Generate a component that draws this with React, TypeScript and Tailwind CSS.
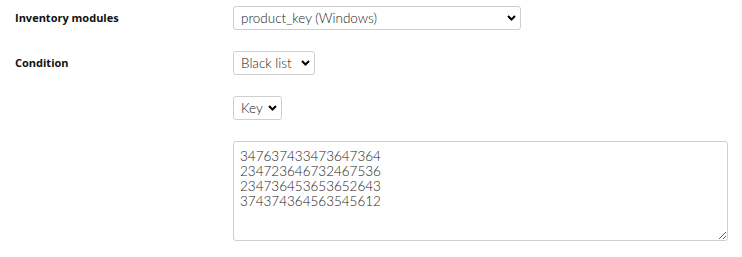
const Chevron = () => (
  <svg
    className="pointer-events-none absolute right-[5px] top-1/2 -translate-y-1/2"
    width="9"
    height="6"
    viewBox="0 0 9 6"
  >
    <path d="M1 1 L4.5 4.5 L8 1" fill="none" stroke="#000" strokeWidth="2" />
  </svg>
);

const Select: React.FC<{ value: string; width: string }> = ({ value, width }) => (
  <div className={`relative ${width}`}>
    <select
      defaultValue={value}
      className="block h-[24px] w-full appearance-none rounded-[3px] border border-[#cfcfcf] bg-white pl-[7px] text-[13.5px] font-light text-[#222] outline-none"
    >
      <option>{value}</option>
    </select>
    <Chevron />
  </div>
);

const Label: React.FC<{ children: React.ReactNode }> = ({ children }) => (
  <div className="flex h-[24px] w-[218px] items-center text-[11px] font-bold text-[#111]">
    {children}
  </div>
);

const App: React.FC = () => {
  return (
    <div className="h-[257px] w-[742px] bg-white font-['Lato',sans-serif]">
      <div className="flex flex-col gap-[21px] pl-[15px] pt-[6px] font-['Open_Sans',sans-serif]">
        <div className="flex">
          <Label>Inventory modules</Label>
          <div className="font-['Lato',sans-serif]">
            <Select value="product_key (Windows)" width="w-[288px]" />
          </div>
        </div>
        <div className="flex">
          <Label>Condition</Label>
          <div className="font-['Lato',sans-serif]">
            <Select value="Black list" width="w-[82px]" />
          </div>
        </div>
        <div className="flex">
          <Label>{""}</Label>
          <div className="font-['Lato',sans-serif]">
            <Select value="Key" width="w-[49px]" />
          </div>
        </div>
        <div className="flex">
          <div className="w-[218px]" />
          <textarea
            defaultValue={
              "347637433473647364\n234723646732467536\n234736453653652643\n374374364563545612"
            }
            className="block h-[100px] w-[495px] rounded-[3px] border border-[#cfcfcf] px-[6px] py-[7px] font-['Lato',sans-serif] text-[13.5px] font-light leading-[15px] text-[#222] outline-none"
          />
        </div>
      </div>
    </div>
  );
};

export default App;
